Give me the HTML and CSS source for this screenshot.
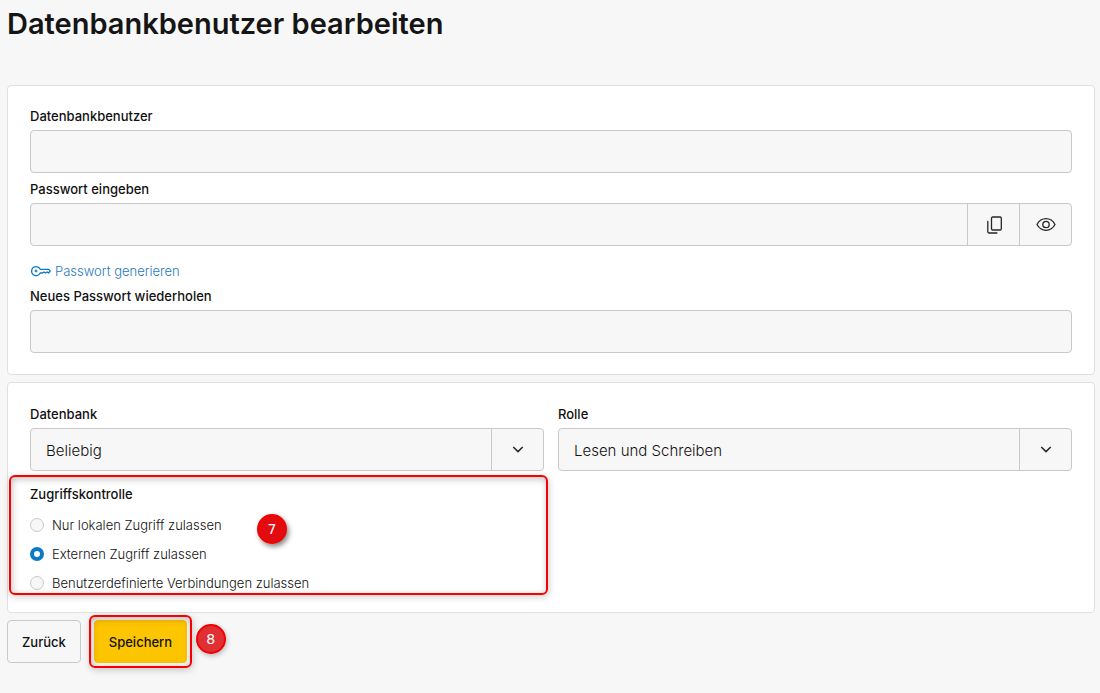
FILE: index.html
```html
<!DOCTYPE html>
<html lang="de">
<head>
<meta charset="utf-8">
<meta name="viewport" content="width=device-width, initial-scale=1">
<title>Datenbankbenutzer bearbeiten</title>
<link rel="stylesheet" href="styles.css">
</head>
<body>
<main class="page">
  <h1 class="title">Datenbankbenutzer bearbeiten</h1>
  <form class="form">
    <section class="card">
      <div class="field">
        <label class="label" for="user">Datenbankbenutzer</label>
        <input class="control" id="user" type="text">
      </div>
      <div class="field">
        <label class="label" for="password">Passwort eingeben</label>
        <div class="group">
          <input class="group-input" id="password" type="password">
          <button class="group-button" type="button" aria-label="Kopieren">
            <svg width="20" height="20" viewBox="0 0 20 20" fill="none" stroke="#262626" stroke-width="1.3" stroke-linecap="round" stroke-linejoin="round"><rect x="7.500" y="2" width="9.800" height="13" rx="1.200"/><path d="M3.800 6.500v10.200A1.300 1.300 0 0 0 5.100 18h7.800"/></svg>
          </button>
          <button class="group-button" type="button" aria-label="Passwort anzeigen">
            <svg width="20" height="20" viewBox="0 0 20 20" fill="none" stroke="#262626" stroke-width="1.3" stroke-linejoin="round"><path d="M1 9.500C3 5.700 6.200 3.700 10 3.700s7 2 9 5.800c-2 3.800-5.200 5.800-9 5.800S3 13.300 1 9.500z"/><circle cx="10" cy="9.500" r="3.200"/></svg>
          </button>
        </div>
      </div>
      <a class="generate" href="#">
        <svg width="20" height="12" viewBox="0 0 20 12" fill="none" stroke="#0b7cc4" stroke-width="1.3" stroke-linejoin="round"><path d="M9.200 4.300h8.600L19.200 6l-1.600 2-1.600-1.100L14.500 8l-1.500-1.100L11.500 8H9.200a4.500 4.500 0 1 1 0-3.700z"/><circle cx="5" cy="6" r="1" fill="#0b7cc4" stroke-width=".8"/></svg>
        <span>Passwort generieren</span>
      </a>
      <div class="field">
        <label class="label" for="repeat">Neues Passwort wiederholen</label>
        <input class="control" id="repeat" type="password">
      </div>
    </section>

    <section class="card card-access">
      <div class="columns">
        <div class="field">
          <label class="label" for="database">Datenbank</label>
          <div class="group">
            <select class="select" id="database"><option>Beliebig</option></select>
            <span class="arrow"><svg width="12" height="8" viewBox="0 0 12 8" fill="none" stroke="#262626" stroke-width="1.5"><path d="M1.300 1 6 5.600 10.700 1"/></svg></span>
          </div>
        </div>
        <div class="field">
          <label class="label" for="role">Rolle</label>
          <div class="group">
            <select class="select" id="role"><option>Lesen und Schreiben</option></select>
            <span class="arrow"><svg width="12" height="8" viewBox="0 0 12 8" fill="none" stroke="#262626" stroke-width="1.5"><path d="M1.300 1 6 5.600 10.700 1"/></svg></span>
          </div>
        </div>
        <div class="access">
          <fieldset class="choices">
            <legend class="label">Zugriffskontrolle</legend>
            <label class="choice"><input class="radio" type="radio" name="access">Nur lokalen Zugriff zulassen</label>
            <label class="choice"><input class="radio" type="radio" name="access" checked>Externen Zugriff zulassen</label>
            <label class="choice"><input class="radio" type="radio" name="access">Benutzerdefinierte Verbindungen zulassen</label>
          </fieldset>
          <span class="marker marker-access"></span>
          <span class="badge badge-access">7</span>
        </div>
      </div>
    </section>

    <div class="actions">
      <button class="button" type="button">Zurück</button>
      <div class="save">
        <button class="button button-primary" type="submit">Speichern</button>
        <span class="marker marker-save"></span>
        <span class="badge badge-save">8</span>
      </div>
    </div>
  </form>
</main>
</body>
</html>
```
FILE: styles.css
```css
* {
  box-sizing: border-box;
}

body {
  margin: 0;
  background: #f7f7f7;
  color: #111;
  font-family: Inter, "Open Sans", sans-serif;
  font-size: 13px;
  line-height: 20px;
}

button,
input,
select {
  font-family: inherit;
  color: inherit;
}

.page {
  padding: 4px 5px 24px 7px;
}

.title {
  margin: 0 0 41px;
  font-size: 29px;
  line-height: 40px;
  font-weight: 600;
  color: #151515;
}

.form {
  display: flex;
  flex-direction: column;
  gap: 7px;
}

.card {
  display: flex;
  flex-direction: column;
  gap: 6px;
  padding: 20px 22px 21px;
  background: #fff;
  border: 1px solid #e0e0e0;
  border-radius: 4px;
}

.card-access {
  padding: 21px 22px 15px;
}

.field {
  display: flex;
  flex-direction: column;
  gap: 4px;
  min-width: 0;
}

.label {
  font-weight: 500;
}

.control,
.group {
  width: 100%;
  height: 43px;
  background: #f7f7f7;
  border: 1px solid #c9c9c9;
  border-radius: 4px;
}

.control {
  padding: 0 15px;
}

.group {
  display: flex;
  position: relative;
  overflow: hidden;
}

.group-input {
  flex: 1;
  min-width: 0;
  padding: 0 15px;
  border: 0;
  background: transparent;
}

.group-button,
.arrow {
  display: flex;
  align-items: center;
  justify-content: center;
  width: 52px;
  padding: 0;
  border: 0;
  border-left: 1px solid #c9c9c9;
  background: transparent;
}

.arrow {
  position: absolute;
  top: 0;
  right: 0;
  bottom: 0;
  pointer-events: none;
}

.select {
  width: 100%;
  padding: 2px 66px 0 15px;
  border: 0;
  background: transparent;
  appearance: none;
  font-size: 15px;
  font-weight: 300;
}

.generate {
  display: flex;
  align-items: center;
  align-self: flex-start;
  gap: 4px;
  margin: 9px 0 -1px 1px;
  color: #2878bd;
  font-weight: 300;
  text-decoration: none;
}

.columns {
  display: grid;
  grid-template-columns: 1fr 1fr;
  gap: 13px 14px;
}

.access {
  position: relative;
  min-width: 0;
}

.choices {
  min-width: 0;
  margin: 0;
  padding: 0;
  border: 0;
}

.choices .label {
  padding: 0;
  margin-bottom: 6px;
}

.choice {
  display: flex;
  align-items: center;
  gap: 8px;
  height: 29px;
  font-weight: 300;
}

.radio {
  width: 14px;
  height: 14px;
  margin: 0;
  appearance: none;
  background: #f7f7f7;
  border: 1px solid #c9c9c9;
  border-radius: 50%;
}

.radio:checked {
  background: #fff;
  border: 4px solid #0b79c5;
}

.marker {
  position: absolute;
  border: 2px solid #f80000;
  border-radius: 6px;
  box-shadow: 1px 2px 7px rgba(0, 0, 0, 0.2), inset 1px 2px 7px rgba(0, 0, 0, 0.25);
  pointer-events: none;
}

.marker-access {
  top: -9px;
  right: -4px;
  bottom: 2px;
  left: -21px;
}

.marker-save {
  inset: -5px;
}

.badge {
  position: absolute;
  display: flex;
  align-items: center;
  justify-content: center;
  width: 30px;
  height: 30px;
  border-radius: 50%;
  background: #e20c10;
  border: 2px solid #f40000;
  box-shadow: 2px 3px 5px rgba(0, 0, 0, 0.45);
  color: #fff;
  font-family: "DejaVu Sans", sans-serif;
  font-size: 14px;
}

.badge-access {
  top: 30px;
  left: 227px;
}

.badge-save {
  top: 4px;
  left: 102px;
  background: #df3034;
  box-shadow: 1px 2px 5px rgba(0, 0, 0, 0.25);
}

.actions {
  display: flex;
  gap: 13px;
}

.save {
  position: relative;
}

.button {
  height: 43px;
  padding: 0 14px;
  background: #f7f7f7;
  border: 1px solid #c9c9c9;
  border-radius: 4px;
  font-size: 13px;
  font-weight: 500;
}

.button-primary {
  background: #fdc400;
  border-color: #fdc400;
}
```
